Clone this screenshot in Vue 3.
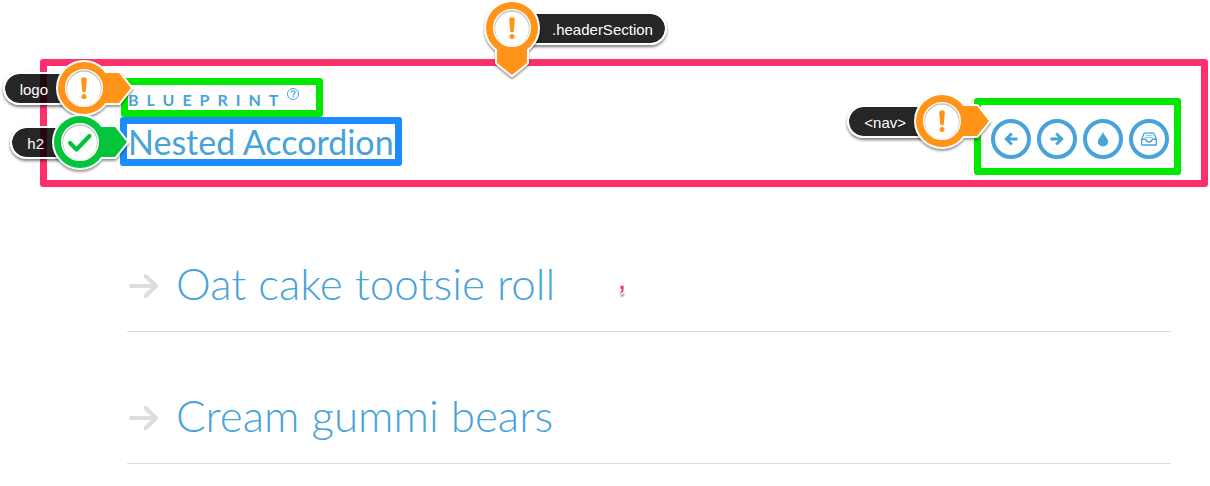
<script setup>
import { h } from 'vue'

const items = [
  { title: 'Oat cake tootsie roll', mark: ',' },
  { title: 'Cream gummi bears' },
]

const links = [
  { name: 'Previous', icon: 'left' },
  { name: 'Next', icon: 'right' },
  { name: 'Drop', icon: 'drop' },
  { name: 'Archive', icon: 'archive' },
]

const body = 'M0 -15H35L47 0L35 15H0Z'

function PinHead({ kind, down }) {
  const fill = kind === 'ok' ? '#04c43c' : '#ff9418'
  const turn = down ? 'rotate(90)' : 'rotate(0)'
  const glyph = kind === 'ok'
    ? [h('path', { d: 'M-10 1L-3.5 7.5L9.5 -6', fill: 'none', stroke: fill, 'stroke-width': 4.2, 'stroke-linecap': 'round', 'stroke-linejoin': 'round' })]
    : [
        h('path', { d: 'M-2.8 -8.5C-2.8 -11.5 2.8 -11.5 2.8 -8.5L1.8 3.3C1.6 4.6 -1.6 4.6 -1.8 3.3Z', fill }),
        h('circle', { cy: 8.6, r: 2.5, fill }),
      ]
  return h('svg', { viewBox: '-32 -32 84 84', width: 84, height: 84, 'aria-hidden': 'true' }, [
    h('g', { transform: turn, fill: '#fff', stroke: '#fff', 'stroke-width': 4, 'stroke-linejoin': 'round' }, [
      h('path', { d: body }),
      h('circle', { r: 26 }),
    ]),
    h('g', { transform: turn, fill }, [
      h('path', { d: body }),
      h('circle', { r: 26 }),
    ]),
    h('circle', { r: 18, fill: '#fff', stroke: '#fff', 'stroke-width': 2 }),
    h('circle', { r: 17, fill: 'none', stroke: '#c4c4c4', 'stroke-width': 1.4 }),
    h('circle', { cy: 1, r: 16.8, fill: '#fff' }),
    ...glyph,
  ])
}
PinHead.props = ['kind', 'down']
</script>

<template>
  <main class="page">
    <header class="header-section">
      <div class="brand">
        <div class="logo">
          <span class="logo-text">Blueprint</span>
          <a class="help" href="#" aria-label="About">
            <svg viewBox="0 0 14 14" width="14" height="14" fill="none" stroke="currentColor" aria-hidden="true">
              <circle cx="7" cy="7" r="5.5" />
              <path d="M5 5.600C5 3.200 9 3.200 9 5.500C9 7 7.100 6.900 7.100 8.400M7.100 9.300V10.600" stroke-width="1.300" />
            </svg>
          </a>
        </div>
        <h2 class="title">Nested Accordion</h2>
      </div>

      <nav class="nav">
        <a v-for="link in links" :key="link.name" class="round" href="#" :aria-label="link.name">
          <svg viewBox="0 0 20 20" width="20" height="20" aria-hidden="true">
            <path v-if="link.icon === 'left'" d="M16.500 10H5.500M10.800 4.500L5.300 10L10.800 15.500" class="arrow-line" />
            <path v-else-if="link.icon === 'right'" d="M3.500 10H14.500M9.200 4.500L14.700 10L9.200 15.500" class="arrow-line" />
            <path v-else-if="link.icon === 'drop'" d="M10 2.500C10.500 6 15 8.700 15 12.700C15 15.500 12.900 17.300 10 17.300C7.100 17.300 5 15.500 5 12.700C5 8.700 9.500 6 10 2.500Z" fill="currentColor" />
            <g v-else fill="none" stroke="currentColor" stroke-width="1.300" stroke-linejoin="round">
              <path d="M2.700 10L5.200 4.200H14.800L17.300 10V16H2.700Z" />
              <path d="M2.700 10.300H6.700L8 12.700H12L13.300 10.300H17.300" stroke-width="1.500" />
              <path d="M6.700 6.600H13.300M5.900 8.500H14.100" stroke-width="1" opacity=".6" />
            </g>
          </svg>
        </a>
        <div class="pin pin-nav">
          <span class="pin-label">&lt;nav&gt;</span>
          <PinHead class="pin-head" kind="warn" />
        </div>
      </nav>

      <div class="pin pin-logo">
        <span class="pin-label">logo</span>
        <PinHead class="pin-head" kind="warn" />
      </div>
      <div class="pin pin-title">
        <span class="pin-label">h2</span>
        <PinHead class="pin-head" kind="ok" />
      </div>
      <div class="pin pin-header">
        <span class="pin-label">.headerSection</span>
        <PinHead class="pin-head" kind="warn" :down="true" />
      </div>
    </header>

    <ul class="accordion">
      <li v-for="item in items" :key="item.title" class="item">
        <button class="toggle" type="button" aria-expanded="false">
          <svg class="toggle-arrow" viewBox="0 0 32 32" width="32" height="32" aria-hidden="true">
            <path d="M4 16H29M18.500 6L29 16L18.500 26" fill="none" stroke="#ddd" stroke-width="4" stroke-linecap="round" stroke-linejoin="round" />
          </svg>
          <span>{{ item.title }}</span>
        </button>
        <span v-if="item.mark" class="mark">{{ item.mark }}</span>
      </li>
    </ul>
  </main>
</template>

<style>
body {
  margin: 0;
  background: #fff;
}
</style>

<style scoped>
.page {
  padding-top: 59px;
  font-family: Lato, "Liberation Sans", sans-serif;
  color: #47a3da;
}
.header-section {
  position: relative;
  display: flex;
  justify-content: space-between;
  align-items: flex-start;
  margin: 0 2px 0 40px;
  padding: 12px 20px 5px 73px;
  border: 7px solid #ff2e6c;
  border-radius: 3px;
}
.brand {
  display: flex;
  flex-direction: column;
  align-items: flex-start;
}
.logo {
  display: flex;
  align-items: flex-start;
  margin-left: 1px;
  padding-right: 16px;
  border: 7px solid #00e800;
  border-radius: 3px;
}
.logo-text {
  padding-top: 4px;
  font-size: 16px;
  line-height: 21px;
  font-weight: 700;
  letter-spacing: 8px;
  text-transform: uppercase;
}
.help {
  display: block;
  height: 14px;
  padding-top: 2px;
  color: inherit;
}
.help svg {
  display: block;
}
.title {
  margin: 0;
  padding: 0 1px;
  border: 7px solid #1a8cff;
  border-radius: 3px;
  font-size: 34px;
  line-height: 35px;
  font-weight: 400;
  white-space: nowrap;
}
.nav {
  position: relative;
  display: flex;
  gap: 6px;
  margin-top: 20px;
  padding: 14px 5px 9px 10px;
  border: 7px solid #00e800;
  border-radius: 3px;
}
.round {
  display: flex;
  align-items: center;
  justify-content: center;
  box-sizing: border-box;
  width: 40px;
  height: 40px;
  border: 4px solid #47a3da;
  border-radius: 50%;
  color: #47a3da;
}
.arrow-line {
  fill: none;
  stroke: currentColor;
  stroke-width: 3;
}
.pin {
  position: absolute;
  display: flex;
  align-items: center;
  height: 56px;
}
.pin-label {
  box-sizing: border-box;
  height: 33px;
  padding: 2px 22px 0 15px;
  border: 2px solid #fff;
  border-right: 0;
  border-radius: 17px 0 0 17px;
  background: rgba(0, 0, 0, 0.85);
  background-clip: padding-box;
  box-shadow: 0 2px 3px rgba(0, 0, 0, 0.5);
  color: #fff;
  font-family: "Liberation Sans", Arial, sans-serif;
  font-size: 15px;
  line-height: 28px;
  white-space: nowrap;
}
.pin-head {
  position: relative;
  z-index: 1;
  flex: none;
  align-self: flex-start;
  margin: -4px 0 0 -18px;
  filter: drop-shadow(0 2px 1px rgba(0, 0, 0, 0.4));
}
.pin-logo {
  right: calc(100% - 89px);
  top: -6px;
}
.pin-title {
  right: calc(100% - 85px);
  top: 48px;
}
.pin-nav {
  right: calc(100% - 13px);
  top: -12px;
}
.pin-header {
  left: 433px;
  top: -66px;
  flex-direction: row-reverse;
}
.pin-header .pin-head {
  margin-left: 0;
  margin-right: -35px;
}
.pin-header .pin-label {
  padding: 2px 12px 0 23px;
  border: 2px solid #fff;
  border-left: 0;
  border-radius: 0 17px 17px 0;
}
.accordion {
  margin: 13px 39px 0 127px;
  padding: 0;
  list-style: none;
}
.item {
  position: relative;
  border-bottom: 1px solid #ddd;
}
.toggle {
  display: flex;
  align-items: center;
  gap: 17px;
  width: 100%;
  padding: 64px 0 29px;
  border: 0;
  background: none;
  color: inherit;
  font-family: inherit;
  font-size: 44px;
  line-height: 32px;
  font-weight: 300;
  text-align: left;
  cursor: pointer;
}
.toggle-arrow {
  flex: none;
  margin-top: 6px;
}
.mark {
  position: absolute;
  left: 492px;
  top: 71px;
  color: #ff2e6c;
  font-family: "Liberation Sans", Arial, sans-serif;
  font-size: 22px;
  line-height: 22px;
  font-weight: 700;
  text-shadow: 2px 0 #fff, -2px 0 #fff, 0 2px #fff, 0 -2px #fff, 1px 1px #fff, 0 4px 2px rgba(0, 0, 0, 0.7);
}
</style>
